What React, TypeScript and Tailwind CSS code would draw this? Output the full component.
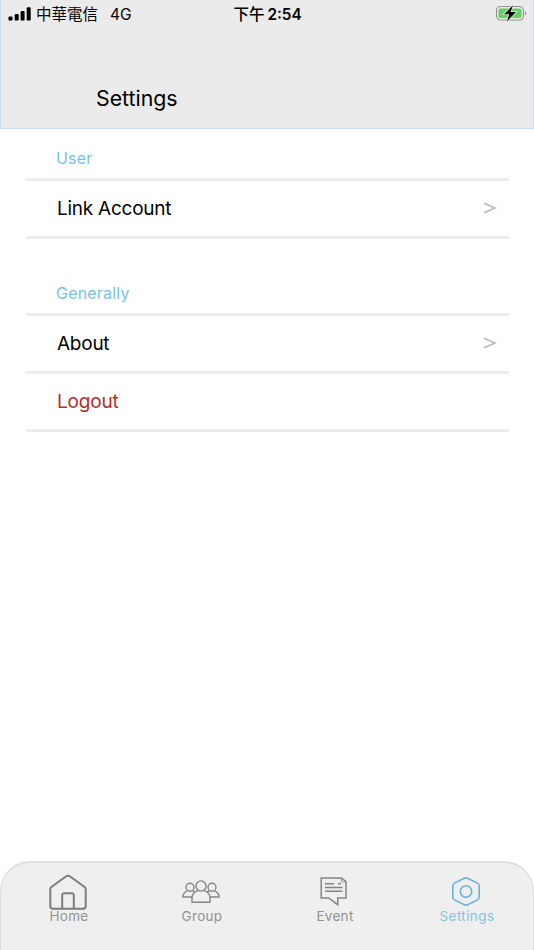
import React from 'react'

const StatusBar = () => {
    return (
        <div className="grid grid-cols-3 items-center h-[28px] pl-[7px] pr-[6px] text-black text-[15.5px] leading-none">
            <div className="flex items-center whitespace-nowrap">
                <svg width="23" height="14" viewBox="0 0 23 14" className="-mt-px">
                    <rect x="0.5" y="9.4" width="4" height="4.2" rx="1.2" />
                    <rect x="6.7" y="7" width="4" height="6.6" rx="1.2" />
                    <rect x="12.6" y="4" width="4" height="9.6" rx="1.2" />
                    <rect x="18.7" y="0.2" width="4" height="13.4" rx="1.2" />
                </svg>
                <span className="ml-[5px] pt-px">中華電信</span>
                <span className="ml-3 pt-px">4G</span>
            </div>
            <div className="text-center whitespace-nowrap pt-px">
                <span className="font-medium">下午</span>
                <span className="ml-[3px] font-semibold text-[15.3px]">2:54</span>
            </div>
            <div className="flex justify-end">
                <svg width="32" height="18" viewBox="0 0 32 18" className="-mt-0.5">
                    <rect x="1.5" y="2.5" width="27" height="13.5" rx="4.2" fill="none" stroke="#929292" strokeWidth="1.1" />
                    <rect x="3.4" y="4.4" width="23.2" height="9.7" rx="2.6" fill="#65ce66" />
                    <path d="M30 7c1.6.8 1.6 3.6 0 4.4z" fill="#929292" />
                    <path d="M18 1.200 9 10.200h5.300l-2.500 7.200L21 8.100h-5.400z" fill="#000" stroke="#ebebeb" strokeWidth="1.6" paintOrder="stroke" />
                </svg>
            </div>
        </div>
    )
}

const HomeIcon = () => (
    <svg width="38" height="36" viewBox="0 0 38 36" fill="none" stroke="#7d7d7d" strokeWidth="2" strokeLinejoin="round">
        <path d="M1.3 15.5c0-1.3.4-2 1.4-2.7L17.2 2.3c1.2-.8 2.400-.8 3.600 0l14.500 10.500c1 .7 1.400 1.400 1.400 2.700v16.800c0 1.600-.8 2.400-2.400 2.400H3.700c-1.600 0-2.400-.8-2.400-2.400z" />
        <path d="M13.200 34.500V21.600c0-1.600.7-2.300 2.300-2.300h7c1.600 0 2.300.7 2.300 2.300v12.900" />
    </svg>
)

const GroupIcon = () => (
    <svg width="38" height="24" viewBox="0 0 38 24" fill="none" stroke="#858585" strokeWidth="1.4">
        <circle cx="19" cy="6" r="5.1" />
        <path d="M10 22.300v-4.400c0-4 3-6.300 6-7.200M22 10.700c3 .9 6 3.200 6 7.200v4.400H9.300" />
        <circle cx="8" cy="7.300" r="4" />
        <circle cx="30" cy="7.300" r="4" />
        <path d="M10 17H.9c0-3.500 1.900-5.200 4.600-6.200M10.500 10.800c1 .4 1.900.8 2.500 1.400M28 17h9.100c0-3.500-1.900-5.200-4.600-6.200M27.500 10.800c-1 .4-1.900.8-2.500 1.400" />
    </svg>
)

const EventIcon = () => (
    <svg width="28" height="30" viewBox="0 0 28 30" fill="none" stroke="#858585" strokeWidth="1.5">
        <path d="M1.200 1h20.300l4.500 3.700v16.200h-8.300v6.800l-9-6.800H1.200z" />
        <path d="M21.300 1v3.900H26" strokeWidth="0.8" />
        <path d="M5 6.700h9M18 6.700h3M5 10.500h17.500M5 14.200h17.500" />
    </svg>
)

const SettingsIcon = () => (
    <svg width="31" height="30" viewBox="0 0 31 30" fill="none" stroke="#69b2da" strokeWidth="1.6" strokeLinejoin="round">
        <path d="M13.300 1.200c1.200-.6 2.200-.6 3.400 0l9.800 4.900c1.200.6 1.700 1.500 1.700 2.800v11.200c0 1.300-.5 2.200-1.700 2.800l-9.800 4.900c-1.200.6-2.200.6-3.400 0l-9.800-4.900c-1.200-.6-1.700-1.500-1.700-2.800V8.900c0-1.300.5-2.200 1.700-2.800z" />
        <circle cx="15" cy="14.500" r="5.700" />
    </svg>
)

const SectionTitle = ({ children }: { children: React.ReactNode }) => (
    <h2 className="h-[49px] pl-[30px] pt-[14px] border-b-3 border-[#ededed] text-[#7bbfe2] text-[16px] leading-6 tracking-[0.2px]">
        {children}
    </h2>
)

const Row = ({ label, arrow, danger }: { label: string; arrow?: boolean; danger?: boolean }) => (
    <li className="flex items-center justify-between h-[58px] pl-[31px] pr-[12px] border-b-3 border-[#ededed]">
        <span className={danger ? 'pt-[2px] text-[#b52d2b] text-[19px] tracking-[-0.2px]' : 'pt-[2px] text-black text-[19px] tracking-[-0.25px]'}>
            {label}
        </span>
        {arrow && (
            <svg width="14" height="12" viewBox="0 0 14 12" className="-mt-px" fill="none" stroke="#b7b7b7" strokeWidth="1.7">
                <path d="M1 1.200 12 6 1 10.800" />
            </svg>
        )}
    </li>
)

const tabs = [
    { label: 'Home', icon: <HomeIcon /> },
    { label: 'Group', icon: <GroupIcon /> },
    { label: 'Event', icon: <EventIcon /> },
    { label: 'Settings', icon: <SettingsIcon />, active: true },
]

export default function App() {
    return (
        <div className="flex flex-col w-[534px] h-[950px] bg-white overflow-hidden font-[Inter,'Noto_Sans_CJK_TC',sans-serif]">
            <header className="h-[129px] bg-[#ebebeb] border-x border-b border-[#c5e0ec]">
                <StatusBar />
                <h1 className="pl-[95px] pt-[55px] text-[21.3px] leading-[30px] text-black">Settings</h1>
            </header>

            <main className="flex-1 ml-[26px] mr-[25px] pt-[3px] bg-white">
                <section>
                    <SectionTitle>User</SectionTitle>
                    <ul>
                        <Row label="Link Account" arrow />
                    </ul>
                </section>
                <section className="mt-7">
                    <SectionTitle>Generally</SectionTitle>
                    <ul>
                        <Row label="About" arrow />
                        <Row label="Logout" danger />
                    </ul>
                </section>
            </main>

            <nav className="h-[89px] bg-[#efefef] border-t-2 border-x border-[#dedede] rounded-t-[30px]">
                <ul className="flex">
                    {tabs.map((tab) => (
                        <li key={tab.label} className="flex flex-col items-center w-[133px]">
                            <div className="flex items-center justify-center h-[36px] mt-[11px]">
                                {tab.icon}
                            </div>
                            <span className={tab.active ? 'ml-px -mt-0.5 text-[13.5px] leading-4 tracking-[0.4px] text-[#86c2e2]' : 'ml-[3px] -mt-0.5 text-[13.5px] leading-4 tracking-[0.3px] text-[#929292]'}>
                                {tab.label}
                            </span>
                        </li>
                    ))}
                </ul>
            </nav>
        </div>
    )
}
